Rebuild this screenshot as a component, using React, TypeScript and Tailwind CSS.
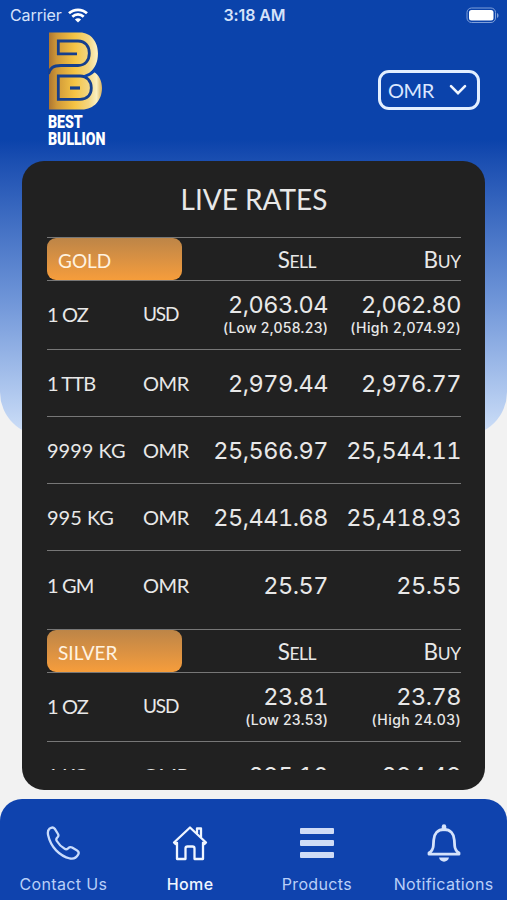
import { ReactNode } from 'react'
import clsx from 'clsx'

interface Rate {
  name: string
  unit: string
  sell: string
  buy: string
  low?: string
  high?: string
}

const gold: Rate[] = [
  { name: '1 OZ', unit: 'USD', sell: '2,063.04', buy: '2,062.80', low: '2,058.23', high: '2,074.92' },
  { name: '1 TTB', unit: 'OMR', sell: '2,979.44', buy: '2,976.77' },
  { name: '9999 KG', unit: 'OMR', sell: '25,566.97', buy: '25,544.11' },
  { name: '995 KG', unit: 'OMR', sell: '25,441.68', buy: '25,418.93' },
  { name: '1 GM', unit: 'OMR', sell: '25.57', buy: '25.55' },
]

const silver: Rate[] = [
  { name: '1 OZ', unit: 'USD', sell: '23.81', buy: '23.78', low: '23.53', high: '24.03' },
  { name: '1 KG', unit: 'OMR', sell: '295.10', buy: '294.49' },
]

function StatusBar() {
  return (
    <div className="grid h-[30px] grid-cols-3 items-center pl-[10px] pr-2 font-['Inter',sans-serif] text-[16px] text-[#d5e2fa]">
      <div className="flex items-center gap-[6px]">
        <span className="tracking-[-0.1px]">Carrier</span>
        <svg width="20" height="15" viewBox="0 0 20 15" fill="none" stroke="#fff" strokeWidth="2.7">
          <path d="M1 5.3C6 .6 14 .6 19 5.3" />
          <path d="M4.3 8.7c3.2-3 8.200-3 11.400 0" />
          <path d="M10 14.500 6.900 11.400c1.800-1.600 4.400-1.600 6.200 0z" fill="#fff" stroke="none" />
        </svg>
      </div>
      <span className="text-center text-[16px] font-semibold tracking-[-0.1px]">3:18 AM</span>
      <svg className="justify-self-end" width="33" height="17" viewBox="0 0 33 17">
        <rect x="1" y="1" width="28.500" height="14.500" rx="4.500" fill="none" stroke="#7f9fd9" />
        <rect x="3" y="3" width="24.500" height="10.500" rx="2.500" fill="#fff" />
        <path d="M31 6v5c2-.8 2-4.200 0-5z" fill="#7f9fd9" />
      </svg>
    </div>
  )
}

function Logo() {
  return (
    <div className="w-[60px] text-white">
      <svg width="56" height="78" viewBox="0 0 56 78" fill="none">
        <defs>
          <linearGradient id="gold" x1="0" y1="0" x2="54" y2="0" gradientUnits="userSpaceOnUse">
            <stop offset="0" stopColor="#a9712f" />
            <stop offset="0.16" stopColor="#cf9838" />
            <stop offset="0.5" stopColor="#f6c545" />
            <stop offset="0.75" stopColor="#f3d682" />
            <stop offset="0.9" stopColor="#fbefc0" />
            <stop offset="1" stopColor="#d9b25c" />
          </linearGradient>
        </defs>
        <path
          d="M1 .5H32C43 .5 50 10 50 21.500 50 30 47 36 42 40.500L46 40C51 43 54 49 54 56 54 68 46 77.500 34 77.500H1Z"
          fill="url(#gold)"
        />
        <g stroke="#163f8d" strokeWidth="2.800">
          <path d="M29 21.800H10.300V9H30C37 9 41.300 14 41.300 21.300S37 33.500 30 33.500H13C5 33.500 2 36 .5 42" />
          <path d="M10.300 44H32C39 44 43.300 49 43.300 56S39 67.300 32 67.300H10.300Z" />
          <path d="M22 56H32" strokeWidth="3.200" />
          <path d="M36 44.500C40 43.500 43 42 46.500 38.500" stroke="#0b43ab" />
        </g>
      </svg>
      <div className="mt-[3px] origin-left scale-x-[0.745] whitespace-nowrap font-['Roboto',sans-serif] text-[19px] font-black leading-[17px] tracking-[-0.1px]">
        <div>BEST</div>
        <div>BULLION</div>
      </div>
    </div>
  )
}

function CurrencySelect() {
  return (
    <button className="flex h-[40px] w-[102px] items-center justify-between rounded-[11px] border-[3px] border-[#e3efff] pl-[7px] pr-[9px] text-[#dbe7ff]">
      <span className="font-['Lato',sans-serif] text-[20px] tracking-[-0.4px]">OMR</span>
      <svg width="20" height="12" viewBox="0 0 20 12" fill="none" stroke="#f0f6ff" strokeWidth="2.600" strokeLinecap="round">
        <path d="m3 2.200 7 7 7-7" />
      </svg>
    </button>
  )
}

function SectionHeader({ title }: { title: string }) {
  return (
    <div className="flex h-[44px] shrink-0 border-y border-[#777]">
      <div className="flex w-[135px] items-center rounded-[9px] bg-linear-to-b from-[#bd8547] to-[#f69d3b] pl-[11px] pt-[5px] text-[19px] text-[#fff3e0]">
        {title}
      </div>
      <span className="w-[134px] pt-px text-right text-[22.500px] leading-[42px] tracking-[-0.5px]">
        S<span className="text-[17.500px]">ELL</span>
      </span>
      <span className="flex-1 pt-px text-right text-[22.500px] leading-[42px] tracking-[-0.3px]">
        B<span className="text-[17.500px]">UY</span>
      </span>
    </div>
  )
}

function Price({ value, note, className }: { value: string; note?: string; className: string }) {
  return (
    <div className={clsx('whitespace-nowrap text-right font-[Inter,sans-serif]', className)}>
      <div className="text-[23.500px] leading-[26px] tabular-nums tracking-[-0.500px]">{value}</div>
      {note && (
        <div
          className={clsx(
            'text-[14px] font-medium leading-[20px]',
            note.startsWith('High') ? 'tracking-[0.450px]' : 'tracking-[0.200px]'
          )}
        >
          ({note})
        </div>
      )}
    </div>
  )
}

function RateRow({ rate, last }: { rate: Rate; last?: boolean }) {
  return (
    <div
      className={clsx(
        'flex shrink-0 items-center',
        rate.low ? 'h-[69px]' : last ? 'h-[78px] pb-[8px]' : 'h-[67px] pt-[2px]',
        !last && 'border-b border-[#777]'
      )}
    >
      <span className={clsx('w-[96px] pb-[2px] text-[20px]', rate.name.startsWith('1 ') && 'tracking-[-0.900px]')}>
        {rate.name}
      </span>
      <span
        className={clsx(
          'w-[54px] pb-[2px]',
          rate.unit === 'USD' ? 'text-[19px] tracking-[-1.100px]' : 'text-[20px] tracking-[-0.4px]'
        )}
      >
        {rate.unit}
      </span>
      <Price className="w-[131px]" value={rate.sell} note={rate.low && `Low ${rate.low}`} />
      <Price className="flex-1" value={rate.buy} note={rate.high && `High ${rate.high}`} />
    </div>
  )
}

function NavItem({ label, active, children }: { label: string; active?: boolean; children: ReactNode }) {
  return (
    <div className={clsx('flex flex-1 flex-col items-center', active ? 'text-[#f0f6ff]' : 'text-[#b9cff8]')}>
      <div className="flex h-[40px] items-center">{children}</div>
      <span className={clsx('mt-[9px] whitespace-nowrap text-[16px] leading-[24px] tracking-[0.350px]', active && 'font-medium')}>
        {label}
      </span>
    </div>
  )
}

export default function App() {
  return (
    <div className="grid h-[900px] w-[507px] overflow-hidden bg-[#f2f2f2]">
      {/* Blue backdrop */}
      <div className="col-start-1 row-start-1 h-[436px] rounded-b-[44px] bg-linear-to-b from-[#0b43ab] from-[140px] via-[#6f95d8] via-[300px] to-[#cfe0f8]" />

      <div className="col-start-1 row-start-1 flex flex-col">
        <StatusBar />
        <header className="flex h-[131px] justify-between pl-[48px] pr-[27px] pt-[2px]">
          <Logo />
          <div className="pt-[38px]">
            <CurrencySelect />
          </div>
        </header>

        {/* Rates card */}
        <main className="mx-[22px] flex h-[629px] flex-col rounded-[22px] bg-[#212121] pl-[25px] pr-[24px] pb-5 font-['Lato',sans-serif] text-[#e8e8e8]">
          <h1 className="h-[76px] pt-[17px] text-center text-[28px] leading-[42px]">LIVE RATES</h1>
          <div className="flex min-h-0 flex-1 flex-col overflow-hidden">
            <SectionHeader title="GOLD" />
            {gold.map((rate, i) => (
              <RateRow key={rate.name} rate={rate} last={i === gold.length - 1} />
            ))}
            <SectionHeader title="SILVER" />
            {silver.map((rate) => (
              <RateRow key={rate.name} rate={rate} />
            ))}
          </div>
        </main>

        {/* Tab bar */}
        <nav className="mt-[9px] flex h-[101px] rounded-t-[22px] bg-[#0f43ae] pt-[24px] font-['Inter',sans-serif]">
          <NavItem label="Contact Us">
            <svg width="34" height="34" viewBox="-0.500 0 34 34" fill="none" stroke="#c9dcfc" strokeWidth="2.300" strokeLinejoin="round">
              <path d="M3 2.700C5 1.200 7 1.200 8.200 2.700L11.500 8c.9 1.600.5 2.600-.8 3.700-1.100 1-1.200 2-.4 3.300 1.900 3.200 4.700 6 7.900 7.800 1.300.8 2.300.5 3.400-.5 1.300-1.200 2.500-1.500 4-.7l5 2.900c1.800 1.100 2 2.500 1 4.200-1.800 3.200-4.700 4.500-8.100 3.800C13 30 4.300 21 1.700 9.500 1 6.500 1.200 4.300 3 2.700z" />
            </svg>
          </NavItem>
          <NavItem label="Home" active>
            <svg width="36" height="36" viewBox="0 0 36 36" fill="none" stroke="currentColor" strokeWidth="2.300" strokeLinejoin="round" strokeLinecap="round">
              <path d="M2 17.500 18 2.500l16 15-1.500 1.500L31 17.800V34h-8.500V23.500q0-2-2-2h-5q-2 0-2 2V34H5V17.800L3.500 19z" />
              <path d="M25 8V3.500H29v8.500" />
            </svg>
          </NavItem>
          <NavItem label="Products">
            <svg width="34" height="30" viewBox="0 0 34 30" fill="#d0dcf6">
              <rect width="34" height="6" rx="1" />
              <rect y="12" width="34" height="6" rx="1" />
              <rect y="24" width="34" height="6" rx="1" />
            </svg>
          </NavItem>
          <NavItem label="Notifications">
            <svg width="34" height="40" viewBox="0 0 34 40" fill="none" stroke="#d5e3fb" strokeWidth="2.800" strokeLinejoin="round">
              <path d="M17 6.500C10.500 6.500 7 11 6.700 17l-.4 6c-.2 3-1.300 5-4.300 7V31.200h30V30c-3-2-4.100-4-4.300-7l-.4-6C27 11 23.500 6.500 17 6.500z" />
              <path d="M17 3.500V6" strokeLinecap="round" strokeWidth="4.500" />
              <path d="M12 34.500h10c-.8 5.500-9.200 5.500-10 0z" fill="#d5e3fb" stroke="none" />
            </svg>
          </NavItem>
        </nav>
      </div>
    </div>
  )
}
